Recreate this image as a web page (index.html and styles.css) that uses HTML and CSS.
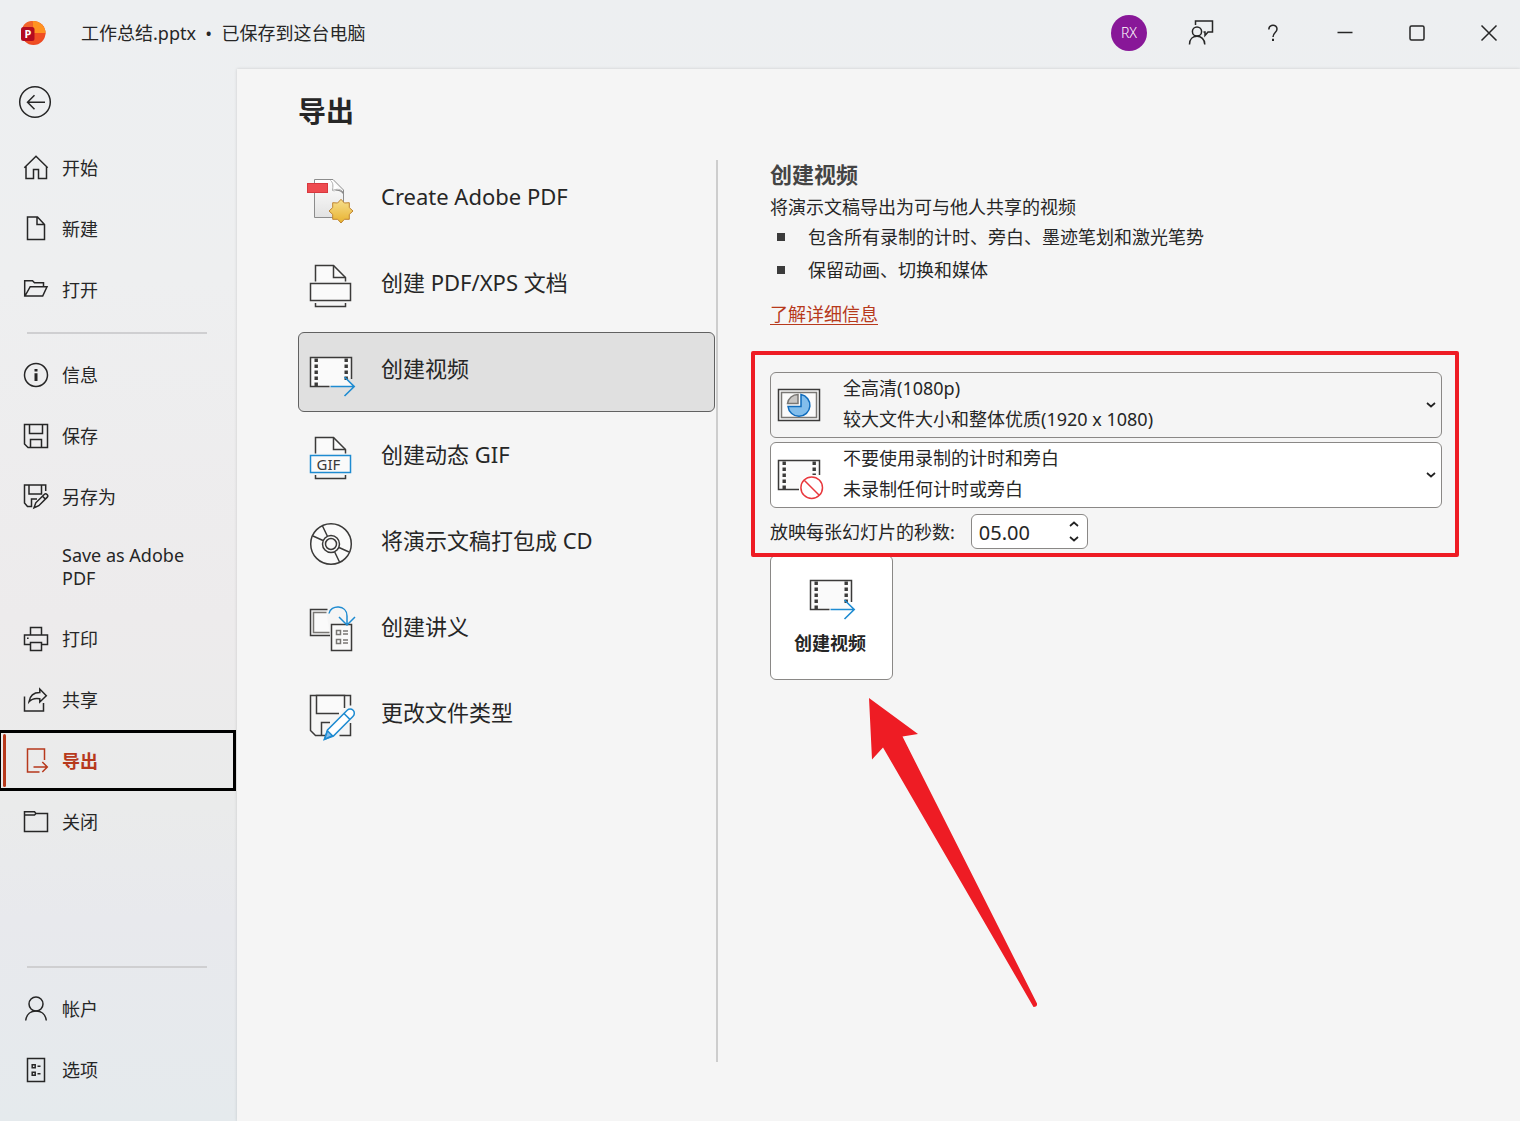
FILE: index.html
```html
<!DOCTYPE html>
<html lang="zh-CN">
<head>
    <meta charset="UTF-8">
    <meta name="viewport" content="width=device-width, initial-scale=1.0">
    <title>工作总结.pptx - 导出</title>
    <link rel="stylesheet" href="styles.css">
</head>
<body>
    <svg class="defs" aria-hidden="true">
        <symbol id="film-arrow" viewBox="0 0 56 56">
            <path d="M28 42.5H8.5V13.5H49.5V35L42 33l8 9z" fill="#fafafa"/>
            <path d="M27.5 42.5H8.5V13.5H49.5V35" fill="none" stroke="#3b3a39" stroke-width="1.5"/>
            <path d="M14.2 14.5V42M44.2 14.5V36" fill="none" stroke="#3b3a39" stroke-width="3.4" stroke-dasharray="3.4 2.6"/>
            <path d="M28.5 42.5H52M42.5 33l9.7 9.5-9.7 9.5" fill="none" stroke="#1e8bd1" stroke-width="1.6"/>
        </symbol>
        <symbol id="chevron" viewBox="0 0 12 12">
            <path d="M2 4l4 3.5 4-3.5" fill="none" stroke="#222" stroke-width="1.7"/>
        </symbol>
    </svg>

    <header class="titlebar">
        <svg class="logo" viewBox="0 0 26 26" aria-label="PowerPoint">
            <circle cx="13.5" cy="13" r="12" fill="#ec4a24"/>
            <path d="M12.5 1A12 12 0 0 1 25.5 13H13z" fill="#ff9321"/>
            <path d="M2 10C3 4 7 1 12.5 1V13H2z" fill="#f2642b"/>
            <path d="M8 22a12 12 0 0 0 17.5-9H12z" fill="#f04e23"/>
            <rect x="1" y="7" width="13.5" height="14" rx="2.5" fill="#b30b20"/>
            <text x="7.8" y="17.8" class="logo-letter">P</text>
        </svg>
        <span class="doc-title">工作总结.pptx&nbsp; • &nbsp;已保存到这台电脑</span>
        <div class="window-buttons">
            <button class="win-btn" aria-label="RX"><span class="avatar">RX</span></button>
            <button class="win-btn" aria-label="反馈">
                <svg width="28" height="28" viewBox="0 0 28 28" class="line">
                    <path d="M8.5 6V2H25.5V13H21L18 16.500V13H16.5"/>
                    <circle cx="10" cy="12.500" r="4.600"/>
                    <path d="M2.5 25.500C2.5 20 6 17.300 10 17.300S17.800 20 17.800 25.500"/>
                </svg>
            </button>
            <button class="win-btn" aria-label="帮助">
                <svg width="20" height="20" viewBox="0 0 20 20" class="line">
                    <path d="M5.800 6.500C5.800 1 14 1 14 6C14 9.500 10 9.500 10 14"/>
                    <path d="M10 15.800V18" stroke-width="2"/>
                </svg>
            </button>
            <button class="win-btn" aria-label="最小化">
                <svg width="18" height="18" viewBox="0 0 18 18" class="line"><path d="M1.5 8.500H16.5"/></svg>
            </button>
            <button class="win-btn" aria-label="最大化">
                <svg width="18" height="18" viewBox="0 0 18 18" class="line"><rect x="2" y="2" width="14" height="14" rx="1.5"/></svg>
            </button>
            <button class="win-btn" aria-label="关闭窗口">
                <svg width="18" height="18" viewBox="0 0 18 18" class="line"><path d="M1.5 1.5l15 15M16.5 1.5l-15 15"/></svg>
            </button>
        </div>
    </header>

    <div class="layout">
        <nav class="sidebar">
            <button class="back-btn" aria-label="返回">
                <svg width="34" height="34" viewBox="0 0 34 34" class="line">
                    <circle cx="17" cy="17" r="15.3"/>
                    <path d="M27 17.3H9.500M16.5 10.3l-7 7 7 7"/>
                </svg>
            </button>

            <a href="#" class="nav-item">
                <svg class="nav-icon line" viewBox="0 0 28 28"><path d="M2.3 13.8L14 2.200 25.7 13.8M4 12.2V24.5H11.5V15.5H16.5V24.5H24.5V12.2"/></svg>
                <span>开始</span>
            </a>
            <a href="#" class="nav-item">
                <svg class="nav-icon line" viewBox="0 0 28 28"><path d="M5.5 2H15.5L22.5 9.5V24.5H5.5zM15 2V9.5H22.5"/></svg>
                <span>新建</span>
            </a>
            <a href="#" class="nav-item">
                <svg class="nav-icon line" viewBox="0 0 28 28"><path d="M2.7 20V4.7H10.5L12.5 6.8H21.5V10.5M3 20L8.2 10.7H25L20.7 20z"/></svg>
                <span>打开</span>
            </a>

            <hr class="nav-line">

            <a href="#" class="nav-item">
                <svg class="nav-icon line" viewBox="0 0 28 28"><circle cx="14" cy="14" r="11.5"/><path d="M14 8V10.6M14 12.2V20" stroke-width="3"/></svg>
                <span>信息</span>
            </a>
            <a href="#" class="nav-item">
                <svg class="nav-icon line" viewBox="0 0 28 28"><path d="M2.5 2.5H25.5V25.5H6L2.5 22zM7.5 2.5V11.5H20.5V2.5M8.5 25.5V17.5H19.5V25.5"/></svg>
                <span>保存</span>
            </a>
            <a href="#" class="nav-item">
                <svg class="nav-icon line" viewBox="0 0 28 28"><path d="M23.7 8V2H2.5V20L5.5 23.5H9.5V16H15M7 2V11H19.5V2"/><path d="M12 24.8l1.8-5L22.2 11.5a2 2 0 0 1 2.9 2.9L16.8 22.7zM20.5 13.2l2.9 2.9"/></svg>
                <span>另存为</span>
            </a>
            <a href="#" class="nav-item nav-item-tall">
                <span>Save as Adobe PDF</span>
            </a>
            <a href="#" class="nav-item">
                <svg class="nav-icon line" viewBox="0 0 28 28"><path d="M8.5 10V2.5H19.5V10M8.5 19.5H2.5V10H25.5V19.5H19.5M8.5 17.5H19.5V25.5H8.5z"/><path d="M5 13.3h1.6"/></svg>
                <span>打印</span>
            </a>
            <a href="#" class="nav-item">
                <svg class="nav-icon line" viewBox="0 0 28 28"><path d="M2.5 10.5V25H21.5V17"/><path d="M7 15.8C8 9 12 6.5 17.8 6.5V3L24.3 9.8 17.8 16V12.8C13 12 9.5 13 7 15.8z"/></svg>
                <span>共享</span>
            </a>
            <a href="#" class="nav-item active" aria-current="page">
                <svg class="nav-icon line" viewBox="0 0 28 28"><path d="M22.5 13V2H5.5V25H17.5M11.5 20H25.5M20.3 15l5 5-5 5"/></svg>
                <span>导出</span>
            </a>
            <a href="#" class="nav-item">
                <svg class="nav-icon line" viewBox="0 0 28 28"><path d="M2.5 23.5V3.7H12.5L14 5.5H25.5V23.5zM2.5 7H12.5L14 5.5"/></svg>
                <span>关闭</span>
            </a>

            <hr class="nav-line nav-bottom">

            <a href="#" class="nav-item">
                <svg class="nav-icon line" viewBox="0 0 28 28"><circle cx="14" cy="9" r="7"/><path d="M3.7 25.5C4.5 19 9 16 14 16S23.5 19 24.3 25.5"/></svg>
                <span>帐户</span>
            </a>
            <a href="#" class="nav-item">
                <svg class="nav-icon line" viewBox="0 0 28 28"><path d="M5.5 2.5H22.5V25.5H5.5zM10.2 8.8h3v3h-3zM10.2 16.2h3v3h-3zM15.5 10.3h3M15.5 17.7h3"/></svg>
                <span>选项</span>
            </a>
        </nav>

        <main class="content">
            <h1>导出</h1>
            <div class="columns">
                <div class="export-list">
                    <button class="export-item">
                        <svg class="export-icon" viewBox="0 0 56 56">
                            <defs>
                                <linearGradient id="paper" x2="0" y2="1"><stop stop-color="#fff"/><stop offset="1" stop-color="#e2e2e2"/></linearGradient>
                                <linearGradient id="gold" x2="0" y2="1"><stop stop-color="#f7df8e"/><stop offset="1" stop-color="#e8b22f"/></linearGradient>
                            </defs>
                            <path d="M12.5 7.5H31L41.5 18V45.5H12.5z" fill="url(#paper)" stroke="#8c8c8c"/>
                            <path d="M28.5 8.5C31.5 11 31 14 30.5 18.5C35 16.5 38.5 17 41 20" fill="#fff" stroke="#aaa"/>
                            <path d="M31 19.5C35 18 38.5 18.5 41 22V20C38 17 34 17.5 31 19.5z" fill="#888"/>
                            <rect x="5.5" y="11.5" width="20" height="9" fill="#ee4b50" stroke="#d8383e"/>
                            <path d="M39 27.3L42.4 31 47.3 30.7 47.3 35.6 51 39 47.3 42.4 47.3 47.3 42.4 47.3 39 51 35.6 47.3 30.7 47.3 30.7 42.4 27 39 30.7 35.6 30.7 30.7 35.6 31z" fill="url(#gold)" stroke="#bf8431"/>
                        </svg>
                        <span>Create Adobe PDF</span>
                    </button>
                    <button class="export-item">
                        <svg class="export-icon dark" viewBox="0 0 56 56">
                            <path d="M13.5 23.5V7.5H31.5L43.5 19.5V23.5" fill="#fafafa"/>
                            <path d="M31.5 7.5V19.5H43.5M13.5 45v3.5h30V45" />
                            <rect x="8.5" y="25.5" width="40" height="17" fill="#fafafa"/>
                        </svg>
                        <span>创建 PDF/XPS 文档</span>
                    </button>
                    <button class="export-item selected">
                        <svg class="export-icon"><use href="#film-arrow"/></svg>
                        <span>创建视频</span>
                    </button>
                    <button class="export-item">
                        <svg class="export-icon dark" viewBox="0 0 56 56">
                            <path d="M13.5 23.5V7.5H31.5L43.5 19.5V23.5" fill="#fafafa"/>
                            <path d="M31.5 7.5V19.5H43.5M13.5 45v3.5h30V45"/>
                            <rect x="8.5" y="25.5" width="40" height="17" fill="#fafafa" stroke="#1e8bd1"/>
                            <text x="26.5" y="39.7" class="gif-text">GIF</text>
                        </svg>
                        <span>创建动态 GIF</span>
                    </button>
                    <button class="export-item">
                        <svg class="export-icon dark" viewBox="0 0 56 56">
                            <circle cx="29" cy="28" r="20.3" fill="#fafafa"/>
                            <circle cx="29" cy="28" r="8.5"/>
                            <circle cx="29" cy="28" r="5.5"/>
                            <path d="M20.5 10l4.8 10M11 20l10 4.5M37.5 46l-4.8-10M47 36l-10-4.5"/>
                        </svg>
                        <span>将演示文稿打包成 CD</span>
                    </button>
                    <button class="export-item">
                        <svg class="export-icon dark" viewBox="0 0 56 56">
                            <path d="M25.5 7.5H8.5V33.5H28"/>
                            <path d="M24.5 10.5H11.5V30.5H27.5" fill="#fafafa" stroke="#797774"/>
                            <rect x="29.5" y="22.5" width="20" height="26" fill="#fafafa"/>
                            <path d="M34.5 28.5h4v4h-4zM34.5 37.5h4v4h-4zM41 29h5M41 32h5M41 38h5M41 41h5" stroke="#797774"/>
                            <path d="M27 11.5C28.5 2.5 45 2.5 45 14V22.5M37 15l8 8 8-8" stroke="#1e8bd1"/>
                        </svg>
                        <span>创建讲义</span>
                    </button>
                    <button class="export-item">
                        <svg class="export-icon dark" viewBox="0 0 56 56">
                            <path d="M48.5 17.5V7.5H8.5V42.5L13.5 47.5H24"/>
                            <path d="M42.500 20V7.5H14.5V25.5H37" fill="#fafafa"/>
                            <path d="M19.5 47V34.5H28M48.5 35V47.5H37.5"/>
                            <path d="M22.5 51.3l3-9.3L45.2 22.3a4.1 4.1 0 0 1 5.9 5.9L31.4 48zM42 25.5l5.9 5.9" fill="#fff" stroke="#1e8bd1"/>
                            <path d="M22.5 51.3l3-8.5 5 5z" fill="#83beec" stroke="#1e8bd1"/>
                        </svg>
                        <span>更改文件类型</span>
                    </button>
                </div>

                <section class="detail">
                    <h2>创建视频</h2>
                    <p>将演示文稿导出为可与他人共享的视频</p>
                    <ul class="features">
                        <li>包含所有录制的计时、旁白、墨迹笔划和激光笔势</li>
                        <li>保留动画、切换和媒体</li>
                    </ul>
                    <a href="#" class="more-link">了解详细信息</a>

                    <div class="settings">
                        <div class="dropdown quality">
                            <select id="quality" aria-label="视频质量" aria-describedby="quality-note">
                                <option>全高清(1080p)</option>
                            </select>
                            <svg class="drop-icon dark" viewBox="1 0 56 56">
                                <rect x="8.5" y="12.5" width="41" height="31" fill="#fafafa"/>
                                <rect x="11.5" y="15.5" width="35" height="25" stroke="#797774"/>
                                <path d="M17.5 26.5A10.5 10.5 0 0 1 28 17.5V26.5z" fill="#c8c6c4" stroke="#797774"/>
                                <path d="M31 17.5A11 11 0 1 1 18 29.5H31z" fill="#83beec" stroke="#0f6cbd"/>
                            </svg>
                            <span class="drop-note" id="quality-note">较大文件大小和整体优质(1920 x 1080)</span>
                            <svg class="drop-chevron"><use href="#chevron"/></svg>
                        </div>
                        <div class="dropdown">
                            <select id="timing" aria-label="计时和旁白" aria-describedby="timing-note">
                                <option>不要使用录制的计时和旁白</option>
                            </select>
                            <svg class="drop-icon dark" viewBox="1 0 56 56">
                                <path d="M29 42.5H8.5V13.5H49.5V28" fill="#fafafa"/>
                                <path d="M14.2 14.5V42M44.2 14.5V28" stroke-width="3.4" stroke-dasharray="3.4 2.6"/>
                                <circle cx="41.7" cy="40.7" r="12.5" fill="#fff" stroke="none"/>
                                <circle cx="41.7" cy="40.7" r="10.8" stroke="#e8383d"/>
                                <path d="M34.2 33.2l15 15" stroke="#e8383d"/>
                            </svg>
                            <span class="drop-note" id="timing-note">未录制任何计时或旁白</span>
                            <svg class="drop-chevron"><use href="#chevron"/></svg>
                        </div>
                        <div class="seconds-row">
                            <label for="seconds">放映每张幻灯片的秒数:</label>
                            <div class="spinner">
                                <input type="text" id="seconds" inputmode="decimal" value="05.00">
                                <div class="spinner-btns">
                                    <button aria-label="增加"><svg class="flip"><use href="#chevron"/></svg></button>
                                    <button aria-label="减少"><svg><use href="#chevron"/></svg></button>
                                </div>
                            </div>
                        </div>
                    </div>

                    <div class="create-wrap">
                        <button class="create-btn">
                            <svg class="create-icon"><use href="#film-arrow"/></svg>
                            <span>创建视频</span>
                        </button>
                        <svg class="arrow" viewBox="0 0 170 312" aria-hidden="true">
                            <path d="M0 0L49 36 33.5 38.5 168 305.5Q168.5 309 164.5 309L14 49.5 3 61.5z" fill="#ee1c24"/>
                        </svg>
                    </div>
                </section>
            </div>
        </main>
    </div>
</body>
</html>
```
FILE: styles.css
```css
* {
    box-sizing: border-box;
}

body {
    margin: 0;
    min-height: 100vh;
    display: flex;
    flex-direction: column;
    font-family: "Noto Sans", "Noto Sans CJK SC", sans-serif;
    font-size: 18px;
    line-height: 24px;
    color: #262626;
    background: linear-gradient(#edeff1 0%, #eeeff0 25%, #edebec 55%, #eaebeb 72%, #e8e9ed 82%, #e5eaed 100%);
}

button,
input,
select {
    font: inherit;
    color: inherit;
}

button {
    padding: 0;
    border: none;
    background: transparent;
    cursor: pointer;
}

svg {
    display: block;
    flex-shrink: 0;
}

.defs {
    position: absolute;
    width: 0;
    height: 0;
}

.line {
    fill: none;
    stroke: currentColor;
    stroke-width: 1.5;
}

.dark {
    fill: none;
    stroke: #3b3a39;
    stroke-width: 1.5;
}

/* title bar */
.titlebar {
    display: flex;
    align-items: center;
    height: 68px;
    padding: 0 7px 2px 20px;
}

.logo {
    width: 26px;
    height: 26px;
}

.logo-letter {
    font-size: 11px;
    font-weight: bold;
    text-anchor: middle;
    fill: #fff;
}

.doc-title {
    margin-left: 35px;
}

.window-buttons {
    display: flex;
    gap: 24px;
    margin-left: auto;
}

.win-btn {
    display: flex;
    align-items: center;
    justify-content: center;
    width: 48px;
    height: 40px;
}

.avatar {
    width: 36px;
    height: 36px;
    border-radius: 50%;
    background: #881798;
    color: #fff;
    font-size: 14px;
    font-weight: 300;
    line-height: 36px;
}

.layout {
    flex: 1;
    display: flex;
}

/* sidebar */
.sidebar {
    display: flex;
    flex-direction: column;
    width: 236px;
    flex-shrink: 0;
    padding-bottom: 21px;
}

.back-btn {
    align-self: flex-start;
    margin: 17px 0 18px 18px;
}

.nav-item {
    display: flex;
    align-items: center;
    gap: 12px;
    min-height: 61px;
    padding-left: 22px;
    color: inherit;
    text-decoration: none;
}

.nav-icon {
    width: 28px;
    height: 28px;
}

.nav-item-tall {
    min-height: 81px;
    padding: 0 40px 2px 62px;
    line-height: 23px;
}

.nav-item.active {
    position: relative;
    margin-left: -2px;
    padding-left: 21px;
    border: 3px solid #000;
    color: #b7391c;
    font-weight: bold;
}

.nav-item.active::before {
    content: "";
    position: absolute;
    left: 2px;
    top: 1px;
    bottom: 1px;
    width: 3px;
    border-radius: 2px;
    background: #b7391c;
}

.nav-line {
    width: 180px;
    height: 2px;
    margin: 12px 0 10px 27px;
    border: none;
    background: #cfcfd1;
}

.nav-bottom {
    margin-top: auto;
}

/* main area */
.content {
    flex: 1;
    display: flex;
    flex-direction: column;
    margin: 1px 0 0 1px;
    padding: 22px 78px 59px 61px;
    background: #f5f5f5;
    box-shadow: 0 0 3px rgba(0, 0, 0, 0.15);
}

h1 {
    margin: 0 0 29px;
    font-size: 28px;
    line-height: 40px;
}

.columns {
    flex: 1;
    display: flex;
}

.export-list {
    display: flex;
    flex-direction: column;
    gap: 6px;
    width: 420px;
    padding-right: 1px;
    border-right: 2px solid #cdcdcd;
    flex-shrink: 0;
}

.export-item {
    display: flex;
    align-items: center;
    gap: 23px;
    height: 80px;
    padding-left: 3px;
    border: 1px solid transparent;
    border-radius: 6px;
    font-size: 22px;
    line-height: 32px;
}

.export-item span {
    padding-bottom: 8px;
}

.export-item.selected {
    background: #e0e0e0;
    border-color: #616161;
}

.export-icon,
.create-icon {
    width: 56px;
    height: 56px;
}

.gif-text {
    font-size: 15px;
    text-anchor: middle;
    fill: #3b3a39;
    stroke: none;
}

/* detail pane */
.detail {
    flex: 1;
    min-width: 0;
    padding-left: 52px;
}

h2 {
    margin: 0;
    font-size: 22px;
    line-height: 28px;
    color: #444;
}

.detail p {
    margin: 7px 0 4px;
}

.features {
    display: flex;
    flex-direction: column;
    gap: 9px;
    margin: 0 0 20px;
    padding: 2px 0 0 7px;
    list-style: none;
}

.features li {
    display: flex;
    align-items: center;
    gap: 23px;
}

.features li::before {
    content: "";
    width: 8px;
    height: 8px;
    background: #3b3b3b;
}

.more-link {
    color: #b7391c;
    text-underline-offset: 3px;
}

.settings {
    position: relative;
    display: flex;
    flex-direction: column;
    gap: 4px;
    margin-top: 46px;
}

/* red frame round the settings */
.settings::after {
    content: "";
    position: absolute;
    inset: -21px -17px -8px -19px;
    border: 4px solid #ee1c24;
    border-radius: 2px;
    pointer-events: none;
    z-index: 1;
}

.dropdown {
    display: grid;
    grid-template-columns: 56px 1fr 12px;
    grid-template-rows: 34px 30px;
    column-gap: 16px;
    padding-right: 4px;
    border: 1px solid #8a8886;
    border-radius: 6px;
    height: 66px;
    background: #fff;
}

.dropdown.quality {
    background: #f5f5f5;
}

.dropdown select {
    grid-area: 1 / 1 / 3 / 4;
    height: 64px;
    padding: 0 0 35px 72px;
    border: none;
    background: transparent;
    appearance: none;
}

.drop-icon,
.drop-note,
.drop-chevron {
    pointer-events: none;
}

.drop-icon {
    grid-area: 1 / 1 / 3 / 2;
    align-self: center;
    width: 56px;
    height: 56px;
}

.drop-note {
    grid-area: 2 / 2;
}

.drop-chevron {
    grid-area: 1 / 3 / 3 / 4;
    align-self: center;
    width: 12px;
    height: 12px;
}

.seconds-row {
    display: flex;
    align-items: center;
    gap: 16px;
    margin-top: 2px;
}

.spinner {
    display: flex;
    width: 117px;
    height: 35px;
    border: 1px solid #8a8886;
    border-radius: 6px;
    background: #fff;
}

.spinner input {
    flex: 1;
    min-width: 0;
    padding: 3px 0 0 7px;
    border: none;
    background: transparent;
    font-size: 20px;
    outline: none;
}

.spinner-btns {
    display: flex;
    flex-direction: column;
    justify-content: space-evenly;
    padding-right: 7px;
}

.spinner svg {
    width: 12px;
    height: 12px;
}

.flip {
    transform: rotate(180deg);
}

.create-wrap {
    position: relative;
    margin-top: 6px;
}

.create-btn {
    display: flex;
    flex-direction: column;
    align-items: center;
    gap: 8px;
    width: 123px;
    height: 125px;
    padding: 11px 3px 0 0;
    border: 1px solid #8a8886;
    border-radius: 6px;
    background: #fff;
    font-weight: bold;
}

.arrow {
    position: absolute;
    left: 99px;
    top: 143px;
    width: 170px;
    height: 312px;
    pointer-events: none;
}
```
